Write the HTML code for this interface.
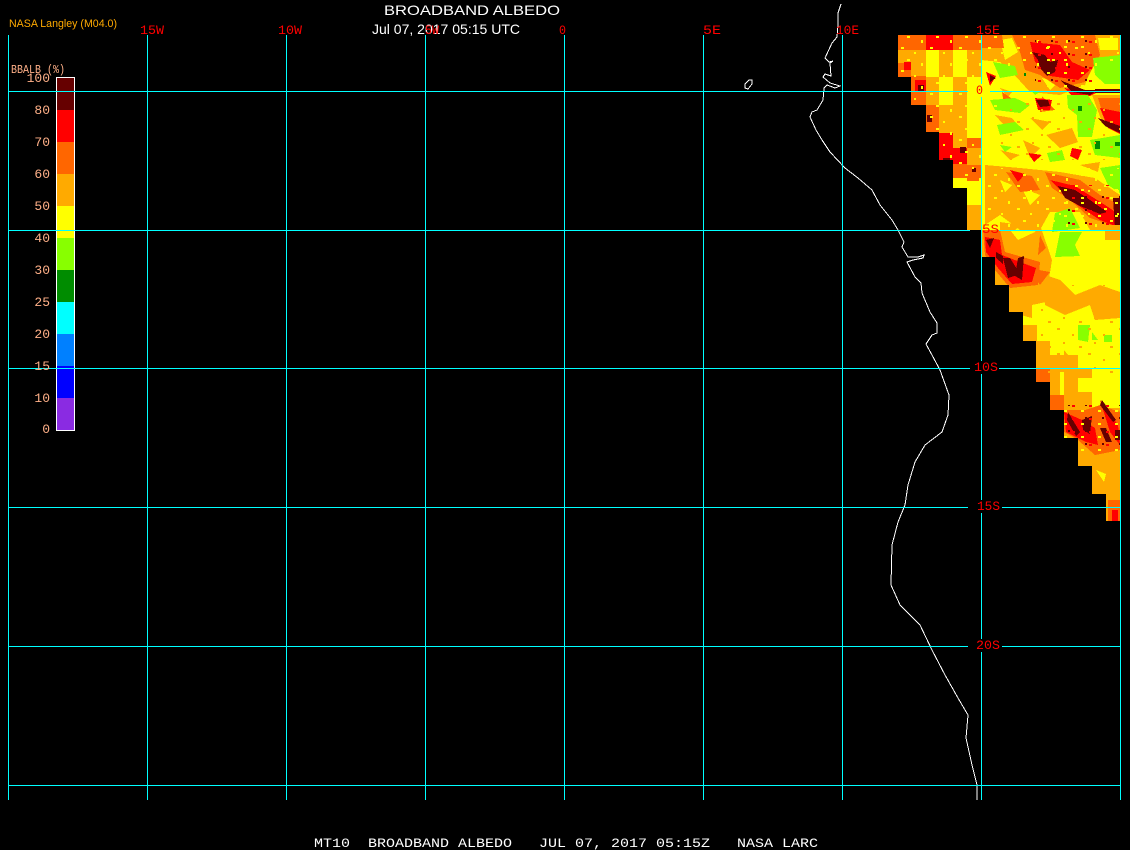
<!DOCTYPE html>
<html><head><meta charset="utf-8"><title>Broadband Albedo</title>
<style>html,body{margin:0;padding:0;background:#000;width:1130px;height:850px;overflow:hidden}svg{display:block}
text{white-space:pre}</style></head>
<body>
<svg width="1130" height="850" viewBox="0 0 1130 850" xmlns="http://www.w3.org/2000/svg" shape-rendering="crispEdges">
<defs>
<clipPath id="m"><path d="M898 35H1120V521H1106V494H1092V466H1078V438H1064V410H1050V382H1036V341H1023V312H1009V285H995V257H982V230H967V188H953V160H939V132H926V105H911V77H898Z"/></clipPath>
<pattern id="sy" width="29" height="23" patternUnits="userSpaceOnUse"><rect x="2" y="1" width="3" height="2" fill="#ff0"/><rect x="15" y="6" width="2" height="2" fill="#ff0"/><rect x="8" y="13" width="3" height="2" fill="#ff0"/><rect x="22" y="17" width="2" height="3" fill="#ff0"/></pattern>
<pattern id="so" width="31" height="25" patternUnits="userSpaceOnUse"><rect x="3" y="3" width="3" height="2" fill="#fa0"/><rect x="18" y="9" width="2" height="2" fill="#fa0"/><rect x="9" y="17" width="2" height="2" fill="#fa0"/><rect x="25" y="21" width="3" height="2" fill="#fa0"/></pattern>
<pattern id="sr" width="17" height="13" patternUnits="userSpaceOnUse"><rect x="1" y="2" width="3" height="2" fill="#f00"/><rect x="10" y="7" width="3" height="2" fill="#ff0"/><rect x="14" y="1" width="2" height="2" fill="#600"/></pattern>
</defs>
<rect width="1130" height="850" fill="#000"/>

<g clip-path="url(#m)">
<rect x="898" y="35" width="222" height="486" fill="#ff0"/>

<!-- block columns, upper-left -->
<rect x="898" y="35" width="13" height="15" fill="#f60"/><rect x="898" y="50" width="13" height="13" fill="#fa0"/><rect x="898" y="63" width="13" height="14" fill="#f60"/>
<rect x="904" y="62" width="7" height="8" fill="#f00"/>
<rect x="911" y="35" width="15" height="28" fill="#f60"/><rect x="911" y="50" width="15" height="13" fill="#fa0"/><rect x="911" y="63" width="15" height="13" fill="#fa0"/><rect x="911" y="76" width="15" height="29" fill="#f60"/>
<rect x="915" y="80" width="11" height="12" fill="#f00"/>
<rect x="926" y="35" width="13" height="15" fill="#f00"/><rect x="926" y="50" width="13" height="27" fill="#ff0"/><rect x="926" y="77" width="13" height="28" fill="#fa0"/><rect x="926" y="105" width="13" height="27" fill="#f60"/>
<rect x="939" y="35" width="14" height="15" fill="#f00"/><rect x="939" y="50" width="14" height="27" fill="#fa0"/><rect x="939" y="77" width="14" height="28" fill="#ff0"/><rect x="939" y="105" width="14" height="28" fill="#fa0"/><rect x="939" y="133" width="14" height="27" fill="#f00"/>
<rect x="953" y="35" width="14" height="15" fill="#f60"/><rect x="953" y="50" width="14" height="27" fill="#ff0"/><rect x="953" y="77" width="14" height="28" fill="#fa0"/><rect x="953" y="105" width="14" height="43" fill="#fa0"/><rect x="953" y="148" width="14" height="16" fill="#f00"/><rect x="953" y="164" width="14" height="14" fill="#f60"/><rect x="953" y="178" width="14" height="10" fill="#ff0"/>
<rect x="967" y="35" width="14" height="15" fill="#f60"/><rect x="967" y="50" width="14" height="27" fill="#fa0"/><rect x="967" y="77" width="14" height="28" fill="#ff0"/><rect x="967" y="105" width="14" height="28" fill="#ff0"/><rect x="967" y="138" width="14" height="10" fill="#f60"/><rect x="967" y="148" width="14" height="17" fill="#fa0"/><rect x="967" y="165" width="14" height="16" fill="#f60"/><rect x="967" y="181" width="14" height="49" fill="#ff0"/>
<rect x="967" y="205" width="14" height="25" fill="#fa0"/>

<!-- orange patches, upper-right -->
<g fill="#fa0">
<path d="M981 35H1120V56L1095 60 1085 85 1060 95 1030 92 1010 70 1000 62 981 60Z"/>
<path d="M995 115L1012 118 1020 128 1003 124Z"/>
<path d="M1000 88L1012 92 1008 97Z"/>
<path d="M1030 118L1050 122 1042 130Z"/>
<path d="M1046 135L1072 128 1078 142 1060 148Z"/>
<path d="M1023 140L1040 148 1030 158Z"/>
<path d="M1000 150L1020 155 1010 160Z"/>
<path d="M1092 95H1120V130L1102 122Z"/>
<path d="M985 165L1020 168 1060 172 1095 178 1120 195V230H1090L1080 212 1050 212 1040 230H1020L1000 215 985 225Z"/>
<path d="M1000 222L1020 225 1015 230H1000Z"/>
<path d="M1080 165L1100 162 1098 172Z"/>
</g>
<g fill="#ff0">
<path d="M1000 40L1012 38 1018 52 1005 60Z"/>
<path d="M1065 50L1078 55 1070 70Z"/>
<path d="M1042 78L1058 82 1050 90Z"/>
<path d="M1022 188L1040 195 1030 205Z"/>
<path d="M1000 180L1012 185 1005 192Z"/>
<path d="M1098 38H1118V50H1100Z"/>
</g>
<!-- dark orange -->
<g fill="#f60">
<path d="M981 35H1002L1004 48 981 48Z"/>
<path d="M1012 35H1095L1100 55 1085 82 1060 88 1040 75 1025 70 1020 52Z"/>
<path d="M1006 172L1032 176 1040 190 1020 192Z"/>
<path d="M1045 172L1080 180 1100 195 1120 205V228L1090 218 1070 200 1052 188Z"/>
<path d="M1098 98H1120V132L1104 118Z"/>
<path d="M1002 92L1014 100 1004 104Z"/>
<path d="M1042 96L1055 110 1040 112Z"/>
</g>
<!-- red -->
<g fill="#f00">
<path d="M1030 42L1060 45 1072 62 1090 70 1078 80 1050 76 1035 62Z"/>
<path d="M1064 88L1098 92 1090 96 1072 96Z"/>
<path d="M1035 98L1052 100 1050 110 1038 110Z"/>
<path d="M1100 108L1120 112V134L1108 128Z"/>
<path d="M1050 180L1075 186 1105 205 1120 215V228L1100 220 1070 200Z"/>
<path d="M1010 170L1025 174 1018 182Z"/>
<path d="M1072 148L1082 150 1078 160 1070 156Z"/>
<path d="M1028 153L1042 155 1034 162Z"/>
<path d="M986 72L996 76 990 86Z"/>
</g>
<!-- dark red -->
<g fill="#600">
<path d="M1032 52L1045 55 1050 62 1058 60 1055 72 1047 76 1040 68 1038 60Z"/>
<path d="M1060 80L1072 85 1085 90 1098 90 1090 95 1072 92Z"/>
<path d="M1095 89H1120V93H1095Z"/>
<path d="M1036 100L1048 100 1050 106 1040 107Z"/>
<path d="M1098 118L1120 126V133L1105 126Z"/>
<path d="M1058 186L1075 190 1090 200 1107 212 1100 214 1080 206 1065 198Z"/>
<path d="M1113 198H1120V228H1115Z"/>
<path d="M990 75L996 78 990 82Z"/>
<path d="M927 115H932V122H927Z"/>
<path d="M960 147H966V153H960Z"/>
<path d="M943 158H950V160H943Z"/>
<path d="M918 85H924V92H918Z"/>
<path d="M972 168H976V172H972Z"/>
</g>
<!-- green -->
<g fill="#8f0">
<path d="M1093 58L1120 55V84H1105L1095 75Z"/>
<path d="M993 62L1015 66 1018 75 1000 78Z"/>
<path d="M990 100L1015 98 1030 105 1020 113 995 110Z"/>
<path d="M1067 95H1088L1097 110 1092 137 1078 137 1077 115 1068 108Z"/>
<path d="M997 125L1015 122 1024 130 1000 135Z"/>
<path d="M1090 140L1120 135V158L1095 155Z"/>
<path d="M1047 153L1062 150 1065 160 1050 162Z"/>
<path d="M1000 145L1012 147 1005 152Z"/>
<path d="M1100 168L1120 165V193L1108 185Z"/>
<path d="M1055 213L1070 208 1080 228 1052 232Z"/>
<path d="M1060 232H1082L1075 245 1080 256 1055 257Z"/>
<path d="M1078 325H1090L1088 342 1078 340Z"/>
<path d="M1104 335H1112V342H1104Z"/>
<path d="M1092 332L1098 340H1092Z"/>
<path d="M1030 90L1040 92 1035 95Z"/>
</g>
<g fill="#008c00">
<path d="M1078 106H1082V111H1078Z"/>
<path d="M1095 141H1100V149H1095Z"/>
<path d="M1115 142H1120V146H1115Z"/>
<path d="M1024 73H1026V76H1024Z"/>
</g>

<!-- lower section -->
<g fill="#fa0">
<path d="M982 230H1010L1018 240 1035 232 1040 225 1052 260 1048 285 1065 298 1032 305 1032 318 1009 312 995 285 982 257Z"/>
<path d="M1045 275L1060 280 1075 295 1100 285 1120 292V318L1095 320 1090 305 1065 315 1045 305Z"/>
<path d="M1105 225H1120V240H1105Z"/>
<path d="M1023 325H1037V341H1023Z"/>
<path d="M1036 341H1050V368H1036Z"/>
<path d="M1050 355H1078V410H1050Z"/>
<path d="M1064 350L1072 360 1064 365Z"/>
<path d="M1078 368H1092V378H1078Z"/>
<path d="M1078 392H1092V410H1078Z"/>
<path d="M1064 408H1120V521H1106V494H1092V466H1078V438H1064Z"/>
</g>
<g fill="#ff0">
<path d="M1078 378H1092V392H1078Z"/>
<path d="M1060 372H1064V395H1060Z"/>
<path d="M1096 470L1106 474 1104 482Z"/>
<path d="M1108 425L1118 450 1112 450Z"/>
<path d="M1096 428L1106 448 1100 446Z"/>
</g>
<g fill="#f60">
<path d="M1036 368H1050V382H1036Z"/>
<path d="M1050 395H1064V410H1050Z"/>
<path d="M1064 410H1085L1100 405 1120 412V450L1095 455 1078 440 1064 432Z"/>
<path d="M983 230H1000L1005 252 1040 262 1038 285 1010 288 995 270 985 255Z"/>
<path d="M1028 268L1050 272 1040 285Z"/>
<path d="M1040 235L1046 248 1038 255Z"/>
<path d="M1108 500H1120V521H1108Z"/>
</g>
<g fill="#f00">
<path d="M985 237L1000 240 1002 255 1020 262 1036 268 1032 282 1012 284 998 268 986 252Z"/>
<path d="M1064 412L1082 420 1095 428 1098 445 1086 442 1066 432Z"/>
<path d="M1100 400L1118 425 1120 445 1110 432Z"/>
<path d="M1112 510H1118V521H1112Z"/>
</g>
<g fill="#600">
<path d="M986 240L994 238 990 248Z"/>
<path d="M996 252L1003 256 1003 264 996 258Z"/>
<path d="M1003 258L1010 258 1020 274 1008 278Z"/>
<path d="M1018 258L1024 256 1022 280 1015 276Z"/>
<path d="M1068 412L1080 432 1076 436 1067 420Z"/>
<path d="M1082 420L1092 416 1090 434 1083 430Z"/>
<path d="M1100 428L1106 428 1112 442 1106 442Z"/>
<path d="M1102 400L1116 420 1113 422 1100 405Z"/>
<path d="M1115 430H1120V440H1115Z"/>
</g>

<rect x="898" y="35" width="100" height="150" fill="url(#sy)"/>
<rect x="981" y="35" width="139" height="35" fill="url(#sy)"/>
<rect x="985" y="168" width="135" height="62" fill="url(#sy)"/>
<rect x="1000" y="100" width="120" height="60" fill="url(#so)"/>
<rect x="1035" y="35" width="60" height="55" fill="url(#sr)"/>
<rect x="1060" y="185" width="60" height="40" fill="url(#sr)"/>
<rect x="1064" y="405" width="56" height="50" fill="url(#sr)"/>
<rect x="1040" y="285" width="80" height="90" fill="url(#so)"/>
</g>

<!-- coastline -->
<g fill="none" stroke="#fff" stroke-width="1">
<polyline points="841,4 838,13 838,25 837,37 832,43 825,58 829,62 833,61 830,63 831,76 825,74 823,77 830,83 840,86 835,88 827,85 824,88 823,100 817,110 812,112 810,117 816,130 822,140 830,152 845,168 858,178 872,190 880,205 892,220 898,230 904,242 902,247 908,257 918,257 924,255 923,258 913,260 907,262 915,277 921,283 922,293 930,312 937,323 937,333 932,335 926,344 932,355 940,370 949,395 948,415 942,432 925,445 915,462 908,485 905,505 898,522 892,545 891,585 900,605 920,625 932,650 945,675 958,698 968,715 966,738 972,765 977,785 977,800"/>
<polygon points="745,84 749,80 752,80 752,84 748,89 745,88"/>
</g>

<!-- legend -->
<rect x="57" y="78" width="17" height="32" fill="#660000"/>
<rect x="57" y="110" width="17" height="32" fill="#f00"/>
<rect x="57" y="142" width="17" height="32" fill="#f60"/>
<rect x="57" y="174" width="17" height="32" fill="#fa0"/>
<rect x="57" y="206" width="17" height="32" fill="#ff0"/>
<rect x="57" y="238" width="17" height="32" fill="#8f0"/>
<rect x="57" y="270" width="17" height="32" fill="#008c00"/>
<rect x="57" y="302" width="17" height="32" fill="#0ff"/>
<rect x="57" y="334" width="17" height="32" fill="#0080ff"/>
<rect x="57" y="366" width="17" height="32" fill="#00f"/>
<rect x="57" y="398" width="17" height="32" fill="#8a2be2"/>
<rect x="56.5" y="77.5" width="18" height="353" fill="none" stroke="#fff"/>

<!-- grid -->
<g stroke="#0ff" stroke-width="1" fill="none">
<path d="M8.5 35V800M147.5 35V800M286.5 35V800M425.5 35V800M564.5 35V800M703.5 35V800M842.5 35V800M1120.5 35V800"/>
<path d="M981.5 35V84M981.5 97V361M981.5 374V500M981.5 513V639M981.5 652V800"/>
<path d="M8 91.5H968M990 91.5H1120M8 230.5H970M999 230.5H1120M8 368.5H970M999 368.5H1120M8 507.5H968M1002 507.5H1120M8 646.5H968M1002 646.5H1120M8 785.5H1120"/>
</g>

<!-- text -->
<g font-family="'Liberation Sans',sans-serif" fill="#fff">
<text x="384" y="15" font-size="14" textLength="176" lengthAdjust="spacingAndGlyphs">BROADBAND ALBEDO</text>
<text x="372" y="34" font-size="14" textLength="148" lengthAdjust="spacingAndGlyphs">Jul 07, 2017 05:15 UTC</text>
<text x="9" y="27" font-size="11" fill="#fa0" textLength="108" lengthAdjust="spacingAndGlyphs">NASA Langley (M04.0)</text>
</g>
<g font-family="'Liberation Mono',monospace" font-size="12.5" fill="#f00">
<text x="140" y="34" textLength="24" lengthAdjust="spacingAndGlyphs">15W</text>
<text x="278" y="34" textLength="24" lengthAdjust="spacingAndGlyphs">10W</text>
<text x="425" y="34" textLength="14" lengthAdjust="spacingAndGlyphs">5W</text>
<text x="559" y="34" textLength="7" lengthAdjust="spacingAndGlyphs">0</text>
<text x="703" y="34" textLength="18" lengthAdjust="spacingAndGlyphs">5E</text>
<text x="836" y="34" textLength="23" lengthAdjust="spacingAndGlyphs">10E</text>
<text x="976" y="34" textLength="24" lengthAdjust="spacingAndGlyphs">15E</text>
<text x="976" y="94" textLength="7" lengthAdjust="spacingAndGlyphs">0</text>
<text x="982" y="233" textLength="17" lengthAdjust="spacingAndGlyphs">5S</text>
<text x="974" y="371" textLength="24" lengthAdjust="spacingAndGlyphs">10S</text>
<text x="977" y="510" textLength="23" lengthAdjust="spacingAndGlyphs">15S</text>
<text x="976" y="649" textLength="24" lengthAdjust="spacingAndGlyphs">20S</text>
</g>
<g font-family="'Liberation Mono',monospace" font-size="13" fill="#ffb088" text-anchor="end">
<text x="50" y="82">100</text>
<text x="50" y="114">80</text>
<text x="50" y="146">70</text>
<text x="50" y="178">60</text>
<text x="50" y="210">50</text>
<text x="50" y="242">40</text>
<text x="50" y="274">30</text>
<text x="50" y="306">25</text>
<text x="50" y="338">20</text>
<text x="50" y="370">15</text>
<text x="50" y="402">10</text>
<text x="50" y="433">0</text>
</g>
<text x="11" y="73" font-family="'Liberation Mono',monospace" font-size="12" fill="#ffb088" textLength="54" lengthAdjust="spacingAndGlyphs">BBALB (%)</text>
<text x="314" y="847" font-family="'Liberation Mono',monospace" font-size="12.5" fill="#fff" textLength="504" lengthAdjust="spacingAndGlyphs" xml:space="preserve">MT10  BROADBAND ALBEDO   JUL 07, 2017 05:15Z   NASA LARC</text>
</svg>
</body></html>
